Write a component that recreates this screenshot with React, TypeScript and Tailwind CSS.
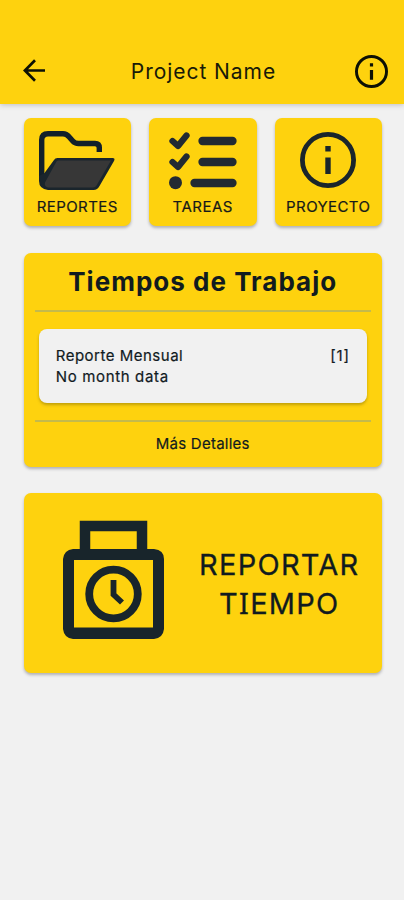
import type { ReactNode } from 'react';

const card = 'rounded-[7px] bg-[#fed20e] shadow-[0_2px_3px_rgba(60,60,70,0.35)]';

function InfoIcon({ size, ring, className }: { size: number; ring: number; className: string }) {
  return (
    <svg width={size} height={size} viewBox="0 0 56 56" fill="none" className={className}>
      <circle cx="28" cy="28" r={28 - ring / 2} stroke="currentColor" strokeWidth={ring} />
      <path d="M25.3 14h5.4v5.4h-5.4zM25.3 25.4h5.4V42h-5.4z" fill="currentColor" />
    </svg>
  );
}

function Tile({ label, spacing, children }: { label: string; spacing: string; children: ReactNode }) {
  return (
    <button className={`flex h-[108px] w-[107.5px] flex-col items-center ${card}`}>
      <span className="flex h-[79px] w-full items-start justify-center">{children}</span>
      <span className={`whitespace-nowrap text-[15px] leading-5 text-[#171a18] [-webkit-text-stroke:0.2px_#171a18] ${spacing}`}>{label}</span>
    </button>
  );
}

export default function App() {
  return (
    <div className="flex h-[900px] w-[404px] flex-col overflow-hidden bg-[#f1f1f1] font-['Inter','Liberation_Sans',sans-serif] text-[#111b1f]">
      <header className="flex h-[104px] shrink-0 items-start justify-between bg-[#fed20e] pr-[16px] pl-[23px] shadow-[0_1px_5px_rgba(80,80,90,0.3)]">
        <svg width="23" height="23" viewBox="0 0 23 23" fill="none" stroke="#0d1004" strokeWidth="2.7" className="mt-[59px]">
          <path d="M12 1.3 1.9 11.5 12 21.7M2 11.5h20" />
        </svg>
        <h1 className="mt-[58px] ml-[6px] text-[21px] leading-7 tracking-[0.95px] whitespace-nowrap text-[#181a08]">Project Name</h1>
        <InfoIcon size={33} ring={5} className="mt-[54.5px] text-[#0d1004]" />
      </header>

      <main className="flex flex-col pt-[14px] pr-[22px] pl-[23.5px]">
        <nav className="flex justify-between">
          <Tile label="REPORTES" spacing="tracking-[0.4px]">
            <svg width="78" height="61" viewBox="0 0 78 61" className="mt-[12px]">
              <path d="M3.7 48V10q0-6.3 6.3-6.3h15q3.5 0 6 3l3.5 4q2.5 2.8 6 2.8H57q4.3 0 4.3 4.3V22" fill="none" stroke="#12202a" strokeWidth="5.4" />
              <path d="M19.5 28H74.5q3 0 1.5 3L61.5 56q-2 4-6 4H10Q1 59 1 51V46l5.5-3L16 30q1-2 3.5-2Z" fill="#1a252c" />
              <path d="M20.5 30.500H73L58.500 55.500q-1 2-3.500 2H10q-4-1-3-5L18.500 31.500q.6-1 2-1Z" fill="#373737" />
            </svg>
          </Tile>
          <Tile label="TAREAS" spacing="tracking-[0.5px]">
            <svg width="70" height="58" viewBox="0 0 70 58" className="mt-[14px]" fill="none" stroke="#222a32" strokeLinecap="round" strokeLinejoin="round">
              <path d="m4.500 9 5.500 5 8.500-10.500M4.500 30l5.500 5 8.500-10.500" strokeWidth="6.300" />
              <path d="M34.500 9h30M34.500 30h30M26.500 51h38" strokeWidth="8.300" />
              <circle cx="7.500" cy="50.700" r="6.500" fill="#222a32" stroke="none" />
            </svg>
          </Tile>
          <Tile label="PROYECTO" spacing="tracking-[0.4px]">
            <InfoIcon size={56} ring={4.8} className="mt-[14px] text-[#1a252b]" />
          </Tile>
        </nav>

        <section className={`mt-[27px] flex h-[214px] flex-col items-center px-[11.5px] ${card}`}>
          <h2 className="flex h-[59px] w-full shrink-0 items-center justify-center border-b-2 border-[#c4ba4c] text-[26px] font-bold tracking-[1.02px] whitespace-nowrap">Tiempos de Trabajo</h2>
          <div className="mt-[17px] flex h-[74px] w-[328px] shrink-0 justify-between rounded-[8px] bg-[#f1f1f1] px-[17px] pt-[16px] text-[15px] leading-[21px] shadow-[0_2px_3px_rgba(80,70,0,0.35)] [-webkit-text-stroke:0.2px_#111b1f]">
            <p className="whitespace-nowrap">
              <span className="tracking-[0.5px]">Reporte Mensual</span>
              <br />
              <span className="tracking-[0.65px]">No month data</span>
            </p>
            <span className="tracking-[0.8px]">[1]</span>
          </div>
          <button className="mt-[17px] flex h-[47px] w-full shrink-0 items-center justify-center border-t-2 border-[#c4ba4c] text-[15px] tracking-[0.25px] [-webkit-text-stroke:0.2px_#111b1f]">Más Detalles</button>
        </section>

        <button className={`mt-[26px] flex h-[180px] justify-between pr-[22.5px] pl-[39px] ${card}`}>
          <svg width="102" height="120" viewBox="0 0 102 120" fill="none" stroke="#18252b" className="mt-[27px]">
            <path d="M22 34V6H79V34" strokeWidth="10.5" />
            <path d="M10 29H91Q101 30 101 39V109Q100 118 91 119H10Q1 118 0 109V39Q1 30 10 29ZM11 40V107.500H90V40Z" fill="#18252b" fillRule="evenodd" stroke="none" />
            <circle cx="50.500" cy="74" r="24.300" strokeWidth="7.800" />
            <path d="M50.500 60v14.500l8.500 8" strokeWidth="5.800" />
          </svg>
          <span className="mt-[53px] text-center text-[29px] leading-[38px] tracking-[1.25px] [-webkit-text-stroke:0.3px_#111b1f]">
            REPORTAR
            <br />
            T<span className="font-['Noto_Sans',sans-serif]">I</span>EMPO
          </span>
        </button>
      </main>
    </div>
  );
}
